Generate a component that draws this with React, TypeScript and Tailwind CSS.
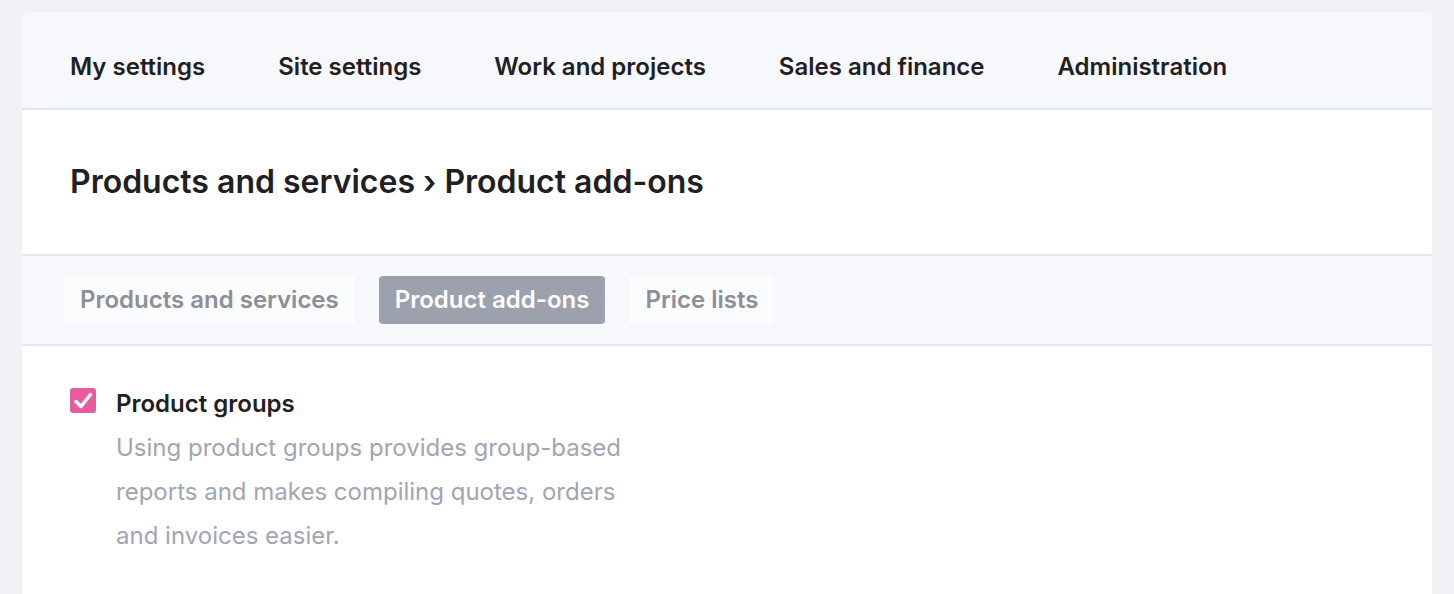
import { useState } from "react";

const navItems = [
  "My settings",
  "Site settings",
  "Work and projects",
  "Sales and finance",
  "Administration",
];

const tabs = ["Products and services", "Product add-ons", "Price lists"];

const App = () => {
  const [activeTab, setActiveTab] = useState("Product add-ons");
  const [checked, setChecked] = useState(true);

  return (
    <main className="min-h-[594px] bg-[#f1f2f6] px-[22px] pt-[12px] font-['Inter',sans-serif]">
      <section className="bg-white rounded-t-[6px] overflow-hidden">
        {/* top nav */}
        <nav className="bg-[#f7f8fc] border-b-2 border-[#e4e6ee] h-[98px] px-[48px] pt-[37px] flex items-start gap-[73px]">
          {navItems.map((item) => (
            <a
              key={item}
              href="#"
              className="text-[24px] leading-[36px] font-semibold text-[#1f2023] whitespace-nowrap"
            >
              {item}
            </a>
          ))}
        </nav>

        {/* page title */}
        <div className="px-[48px] pt-[53px] pb-[53px] border-b-2 border-[#e4e6ee]">
          <h1 className="text-[32px] leading-[38px] font-semibold text-[#1f2023]">
            Products and services › Product add-ons
          </h1>
        </div>

        {/* sub tabs */}
        <div className="bg-[#f7f8fc] border-b-2 border-[#e4e6ee] px-[42px] py-[20px] flex items-center gap-[24px]">
          {tabs.map((tab) => (
            <button
              key={tab}
              onClick={() => setActiveTab(tab)}
              className={`${
                tab === activeTab
                  ? "bg-[#9ba1ad] text-white"
                  : "bg-[#fbfcfe] text-[#8c8f95]"
              } h-[48px] px-[16px] rounded-[4px] text-[24px] font-semibold whitespace-nowrap`}
            >
              {tab}
            </button>
          ))}
        </div>

        {/* settings */}
        <div className="px-[48px] pt-[36px] pb-[40px]">
          <label className="flex items-start gap-[20px] cursor-pointer">
            <span
              onClick={() => setChecked(!checked)}
              className={`${
                checked ? "bg-[#e65c9c]" : "bg-white border-2 border-[#c9ccd4]"
              } mt-[6px] w-[26px] h-[25px] rounded-[3px] flex items-center justify-center shrink-0`}
            >
              {checked && (
                <svg width="22" height="22" viewBox="0 0 22 22" fill="none">
                  <path
                    d="M4 11.5l5 5L18.5 4.5"
                    stroke="white"
                    strokeWidth="3.5"
                    strokeLinecap="round"
                    strokeLinejoin="round"
                  />
                </svg>
              )}
            </span>
            <div>
              <div className="text-[24px] leading-[44px] font-semibold text-[#1f2023]">
                Product groups
              </div>
              <p className="w-[520px] text-[24px] leading-[44px] text-[#a0a6b2]">
                Using product groups provides group-based reports and makes
                compiling quotes, orders and invoices easier.
              </p>
            </div>
          </label>
        </div>
      </section>
    </main>
  );
};

export default App;
